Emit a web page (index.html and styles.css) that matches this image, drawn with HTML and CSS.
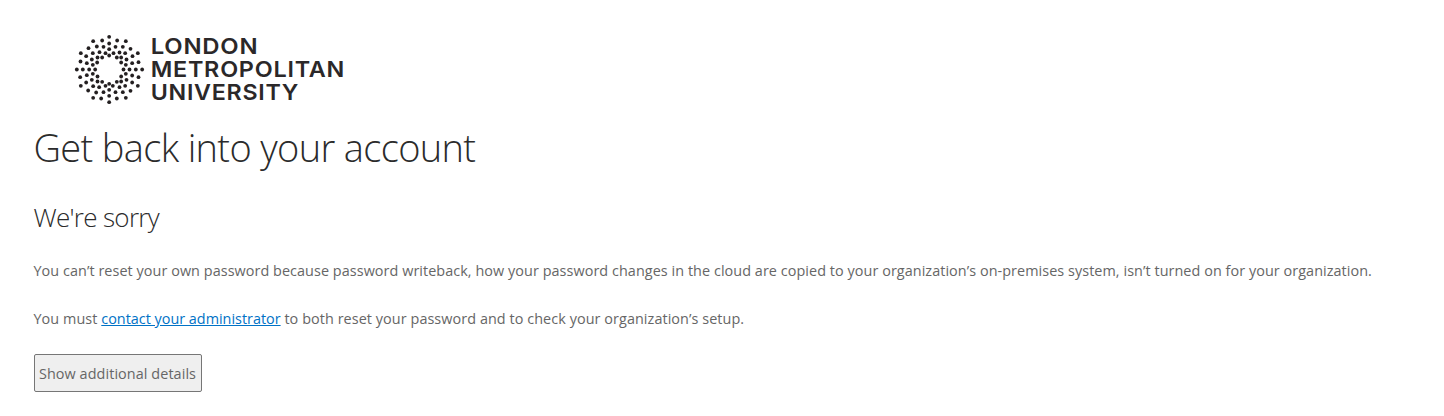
FILE: index.html
```html
<!DOCTYPE html>
<html lang="en">
<head>
<meta charset="utf-8">
<title>Get back into your account</title>
<link rel="stylesheet" href="styles.css">
</head>
<body>
<main class="page">
  <svg class="logo" width="290" height="80" viewBox="0 0 290 80" role="img" aria-label="London Metropolitan University">
    <g id="dots" class="logo-dots" transform="scale(.33333)"></g>
    <g class="logo-text">
      <text x="80.7" y="24" textLength="107.6" lengthAdjust="spacingAndGlyphs">LONDON</text>
      <text x="80.7" y="46.8" textLength="194.4" lengthAdjust="spacingAndGlyphs">METROPOLITAN</text>
      <text x="80.7" y="69.8" textLength="148.5" lengthAdjust="spacingAndGlyphs">UNIVERSITY</text>
    </g>
  </svg>
  <h1 class="title">Get back into your account</h1>
  <h2 class="subtitle">We're sorry</h2>
  <p class="message reason">You can’t reset your own password because password writeback, how your password changes in the cloud are copied to your organization’s on-premises system, isn’t turned on for your organization.</p>
  <p class="message">You must <a class="link" href="#">contact your administrator</a> to both reset your password and to check your organization’s setup.</p>
  <button class="details" type="button">Show additional details</button>
</main>
<script src="logo.js"></script>
</body>
</html>
```
FILE: styles.css
```css
body {
  margin: 0;
  background: #fff;
  color: #666;
  font-family: "Open Sans", "Noto Sans", sans-serif;
  font-size: 14.4px;
}
.page {
  display: flex;
  flex-direction: column;
  align-items: flex-start;
  padding: 30px 0 0 33.5px;
  white-space: nowrap;
}
.logo {
  display: block;
  margin-left: 36.5px;
}
.logo-dots {
  fill: #231f20;
}
.logo-text {
  fill: #2b2829;
  font-family: Inter, sans-serif;
  font-size: 22px;
  font-weight: 600;
  letter-spacing: 0.7px;
}
.title {
  margin: 9px 0 0;
  color: #2b2b2b;
  font-size: 38px;
  font-weight: 300;
  line-height: 56px;
  letter-spacing: -0.65px;
}
.subtitle {
  margin: 22px 0 0;
  color: #2b2b2b;
  font-size: 26px;
  font-weight: 300;
  line-height: 40px;
  letter-spacing: -0.7px;
}
.message {
  margin: 22px 0 0;
  line-height: 24px;
  letter-spacing: 0.07px;
}
.reason {
  letter-spacing: 0.062px;
}
.message + .message {
  margin-top: 24px;
}
.link {
  color: #0072c6;
  text-decoration: underline;
  letter-spacing: 0;
}
.details {
  width: 168px;
  height: 38px;
  margin: 23px 0 0;
  padding: 0;
  border: 1px solid #767676;
  border-radius: 2px;
  background: #efefef;
  color: #666;
  font: inherit;
  letter-spacing: 0.08px;
}
```
FILE: logo.js
```js
const dots = [
  [117,20],[69,33],[96,31],[141,31],[167,33],[117,40],
  [80,49],[100,50],[136,50],[158,50],[55,54],[181,56],[117,57],
  [88,66],[148,67],[32,69],[203,69],[68,69],[106,69],[130,69],[165,69],
  [117,76],[48,78],[187,78],[82,82],[96,82],[140,82],[153,82],
  [65,88],[169,88],[31,94],[50,99],[186,99],[205,96],[81,97],[153,97],[68,104],[167,104],
  [20,118],[38,118],[57,118],[75,118],[160,118],[178,118],[197,118],[216,118],
  [30,141],[205,141],[50,135],[186,136],[68,131],[167,131],[82,139],[153,139],
  [65,149],[169,149],[82,154],[96,155],[140,155],[153,154],[117,161],
  [32,167],[203,167],[48,157],[186,157],[69,168],[106,167],[128,167],[165,167],
  [87,171],[148,171],[117,179],[54,181],[181,182],[78,187],[100,186],[136,186],[158,186],
  [117,197],[69,203],[93,205],[140,205],[167,203],[117,216]
];
const group = document.getElementById('dots');
for (const [x, y] of dots) {
  const dot = document.createElementNS('http://www.w3.org/2000/svg', 'circle');
  dot.setAttribute('cx', x + 0.5);
  dot.setAttribute('cy', y + 0.5);
  dot.setAttribute('r', 5.7);
  group.appendChild(dot);
}
```
